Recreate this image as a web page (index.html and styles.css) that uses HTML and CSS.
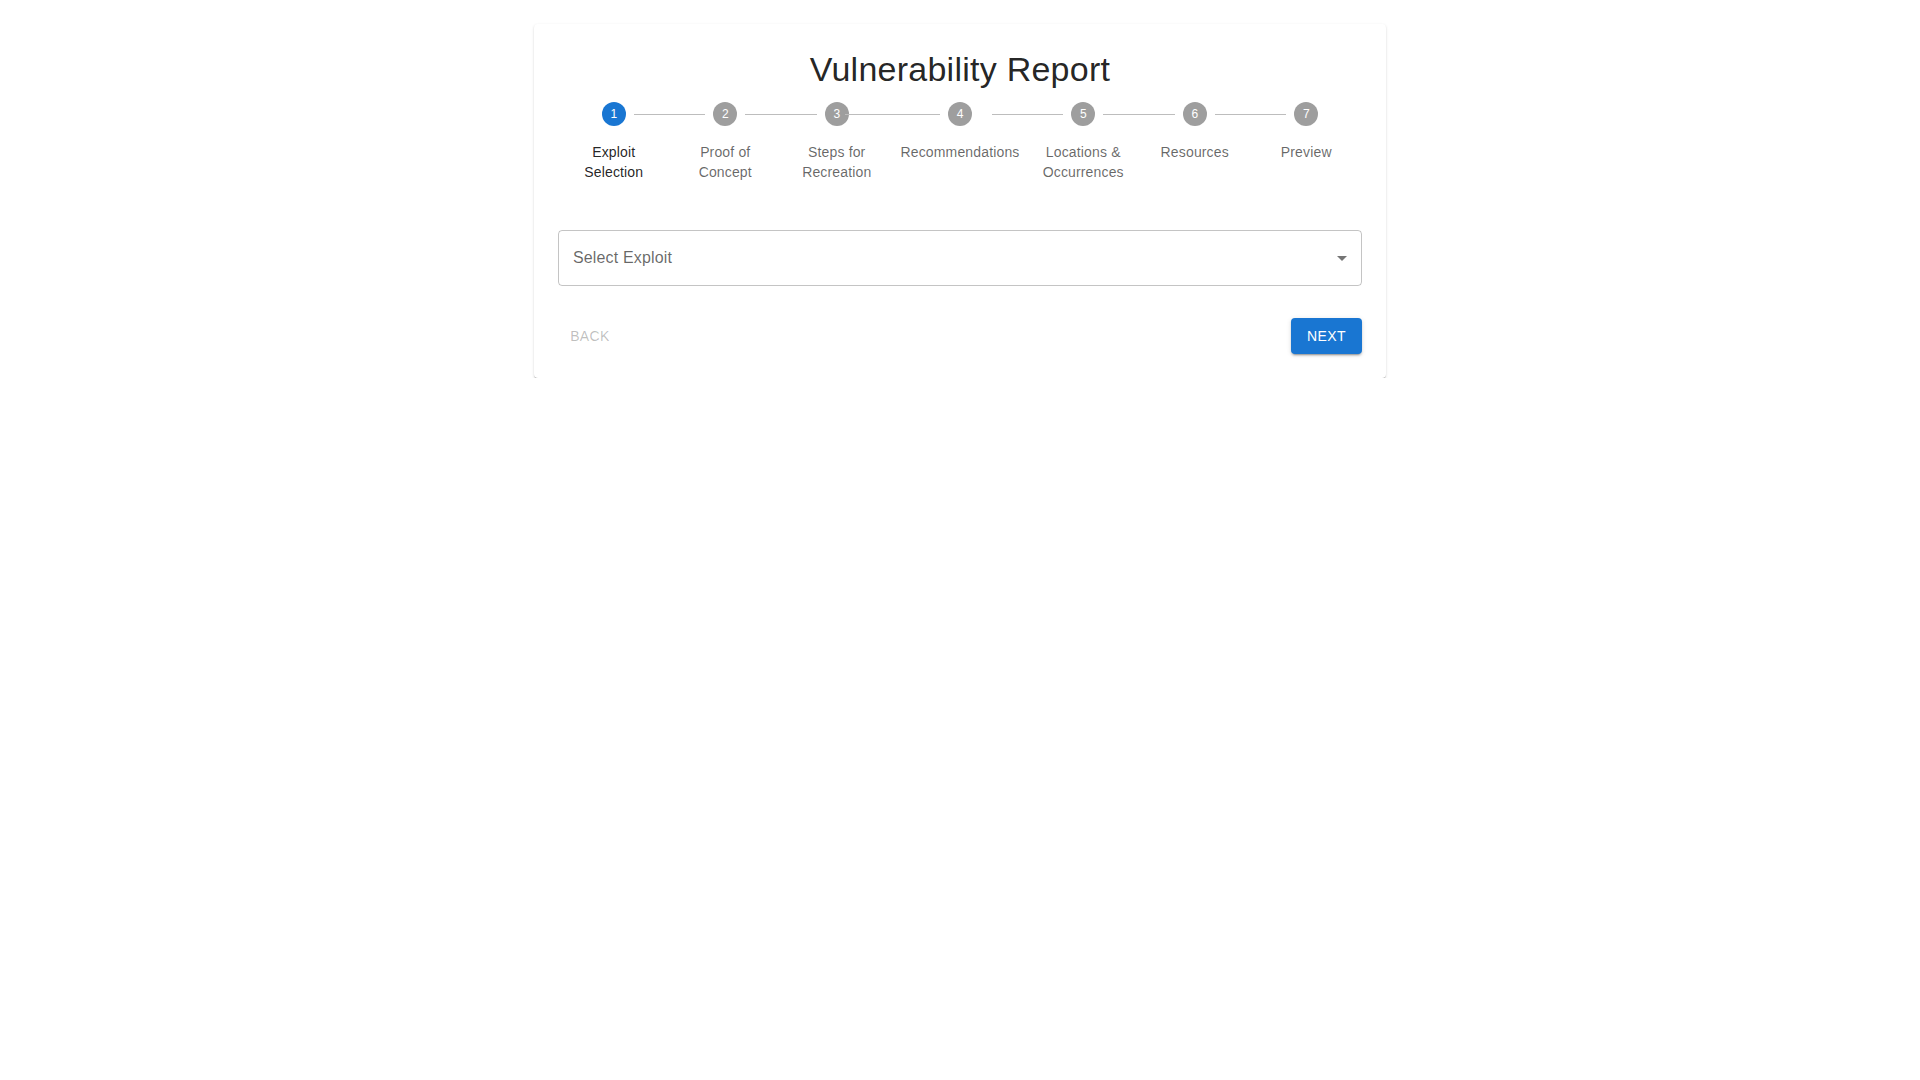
FILE: index.html
```html
<!DOCTYPE html>
<html lang="en">

<head>
    <meta charset="UTF-8">
    <meta name="viewport" content="width=device-width, initial-scale=1.0">
    <title>Vulnerability Report</title>
    <link rel="stylesheet" href="styles.css">
</head>

<body>
    <div class="report-container">
        <div class="report-card">
            <h4 class="report-title">Vulnerability Report</h4>

            <!-- Stepper -->
            <div class="stepper">
                <div class="step active">
                    <div class="step-icon">1</div>
                    <div class="step-label">Exploit Selection</div>
                </div>
                <div class="step">
                    <div class="step-connector"></div>
                    <div class="step-icon">2</div>
                    <div class="step-label">Proof of Concept</div>
                </div>
                <div class="step">
                    <div class="step-connector"></div>
                    <div class="step-icon">3</div>
                    <div class="step-label">Steps for Recreation</div>
                </div>
                <div class="step">
                    <div class="step-connector"></div>
                    <div class="step-icon">4</div>
                    <div class="step-label">Recommendations</div>
                </div>
                <div class="step">
                    <div class="step-connector"></div>
                    <div class="step-icon">5</div>
                    <div class="step-label">Locations &amp; Occurrences</div>
                </div>
                <div class="step">
                    <div class="step-connector"></div>
                    <div class="step-icon">6</div>
                    <div class="step-label">Resources</div>
                </div>
                <div class="step">
                    <div class="step-connector"></div>
                    <div class="step-icon">7</div>
                    <div class="step-label">Preview</div>
                </div>
            </div>

            <!-- Exploit select -->
            <div class="select-field">
                <span class="select-placeholder">Select Exploit</span>
                <svg class="select-arrow" viewBox="0 0 24 24" width="24" height="24">
                    <path d="M7 10l5 5 5-5z"></path>
                </svg>
            </div>

            <div class="actions">
                <button class="btn btn-back" disabled>Back</button>
                <button class="btn btn-next">Next</button>
            </div>
        </div>
    </div>
</body>

</html>
```

FILE: styles.css
```css
/* General body and container styling */
body {
    font-family: "Liberation Sans", Arial, Helvetica, sans-serif;
    background-color: #fff;
    margin: 0;
    padding: 0;
    color: rgba(0, 0, 0, 0.87);
}

.report-container {
    max-width: 900px;
    margin: 24px auto 0;
    padding: 0 24px;
    box-sizing: border-box;
}

.report-card {
    background-color: #fff;
    padding: 24px;
    border-radius: 4px;
    box-shadow: 0 2px 1px -1px rgba(0, 0, 0, 0.2), 0 1px 1px 0 rgba(0, 0, 0, 0.14), 0 1px 3px 0 rgba(0, 0, 0, 0.12);
}

.report-title {
    margin: 0 0 11.9px;
    font-size: 34px;
    font-weight: 400;
    line-height: 42px;
    letter-spacing: 0.25px;
    text-align: center;
    color: rgba(0, 0, 0, 0.87);
}

/* Stepper styling */
.stepper {
    display: flex;
    align-items: flex-start;
}

.step {
    flex: 1 1 0%;
    position: relative;
    padding: 0 8px;
    text-align: center;
}

.step-connector {
    position: absolute;
    top: 12px;
    left: calc(-50% + 20px);
    right: calc(50% + 20px);
    border-top: 1px solid #bdbdbd;
}

.step-icon {
    width: 24px;
    height: 24px;
    margin: 0 auto;
    border-radius: 50%;
    background-color: #9e9e9e;
    color: #fff;
    font-size: 12px;
    line-height: 24px;
    text-align: center;
}

.step.active .step-icon {
    background-color: #1976d2;
}

.step-label {
    margin-top: 16px;
    font-size: 14px;
    line-height: 20px;
    letter-spacing: 0.15px;
    color: rgba(0, 0, 0, 0.6);
}

.step.active .step-label {
    color: rgba(0, 0, 0, 0.87);
}

/* Select field */
.select-field {
    position: relative;
    display: flex;
    align-items: center;
    height: 56px;
    margin-top: 48px;
    padding: 0 14px;
    border: 1px solid rgba(0, 0, 0, 0.23);
    border-radius: 4px;
    box-sizing: border-box;
}

.select-placeholder {
    font-size: 16px;
    letter-spacing: 0.15px;
    color: rgba(0, 0, 0, 0.6);
}

.select-arrow {
    position: absolute;
    right: 7px;
    top: 15px;
    fill: rgba(0, 0, 0, 0.54);
}

/* Buttons */
.actions {
    display: flex;
    justify-content: space-between;
    margin-top: 32px;
}

.btn {
    min-width: 64px;
    height: 36px;
    font-family: inherit;
    font-size: 14px;
    font-weight: 500;
    letter-spacing: 0.4px;
    text-transform: uppercase;
    border: none;
    border-radius: 4px;
    cursor: pointer;
}

.btn-back {
    padding: 6px 8px;
    background: none;
    color: rgba(0, 0, 0, 0.26);
    cursor: default;
}

.btn-next {
    padding: 6px 16px;
    background-color: #1976d2;
    color: #fff;
    box-shadow: 0 3px 1px -2px rgba(0, 0, 0, 0.2), 0 2px 2px 0 rgba(0, 0, 0, 0.14), 0 1px 5px 0 rgba(0, 0, 0, 0.12);
}

.btn-next:hover {
    background-color: #1565c0;
}
```
